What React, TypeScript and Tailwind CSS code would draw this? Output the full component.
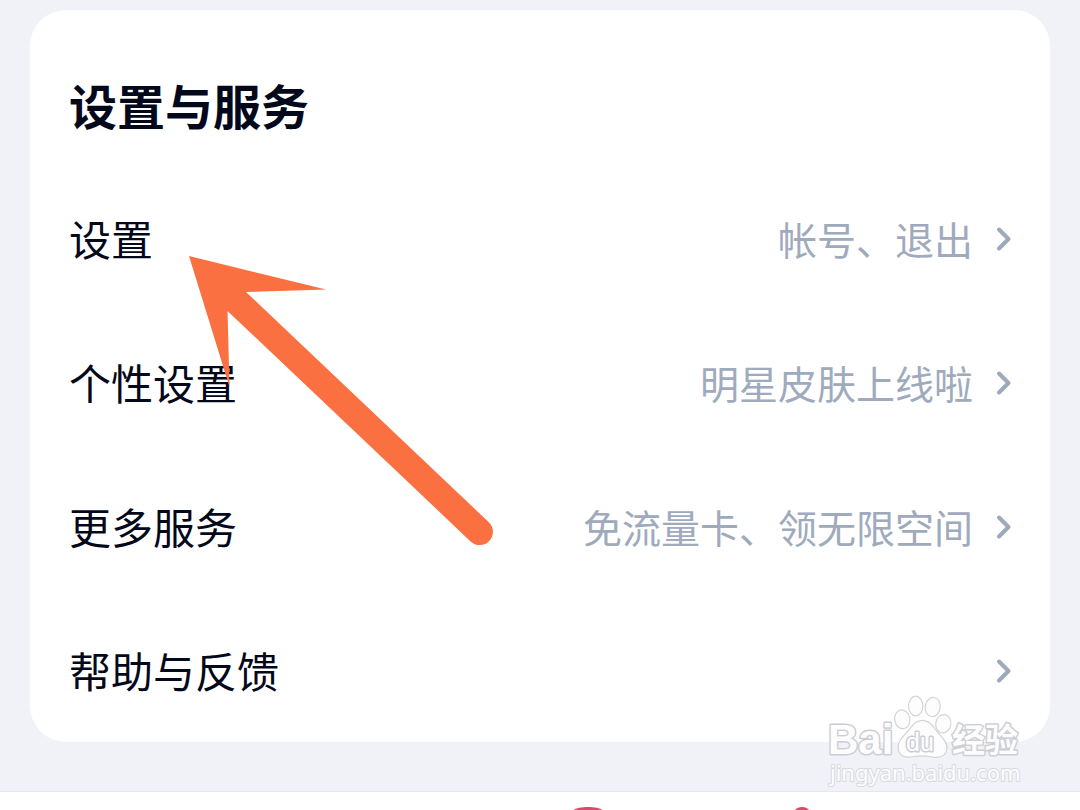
interface SettingItem {
  label: string
  hint?: string
}

const items: SettingItem[] = [
  { label: '设置', hint: '帐号、退出' },
  { label: '个性设置', hint: '明星皮肤上线啦' },
  { label: '更多服务', hint: '免流量卡、领无限空间' },
  { label: '帮助与反馈' },
]

const Chevron = () => (
  <svg className="h-8 w-5 shrink-0" viewBox="0 0 20 32" fill="none" aria-hidden="true">
    <path
      d="M6 7.500L15.500 17L6 26.500"
      stroke="#9fa9bc"
      strokeWidth="4"
      strokeLinecap="round"
      strokeLinejoin="round"
    />
  </svg>
)

const SettingRow = ({ label, hint }: SettingItem) => (
  <li>
    <button type="button" className="flex h-[136px] w-full items-center text-left">
      <span className="flex-1 text-[42px] leading-none text-[#03081a]">{label}</span>
      <span className="flex items-center gap-5 text-[39px] leading-none text-[#a0aabd]">
        {hint}
        <Chevron />
      </span>
    </button>
  </li>
)

const Arrow = () => (
  <svg
    className="pointer-events-none absolute top-[246px] left-[159px] h-[290px] w-[306px]"
    viewBox="189 256 306 290"
    aria-hidden="true"
  >
    <path
      d="M189 256L326 289.5L246 292L488.8 522.2A13.2 13.2 0 0 1 470.6 541.4L227.5 311L229.5 387Z"
      fill="#fb7041"
    />
  </svg>
)

const Watermark = () => (
  <svg
    className="pointer-events-none absolute right-[55px] bottom-0 h-[100px] w-[200px]"
    viewBox="0 0 200 100"
    aria-label="Baidu 经验"
  >
    <g fill="#fdfdfe" stroke="#d3d4d8" strokeWidth="1.2">
      <ellipse cx="77.3" cy="28.3" rx="7.6" ry="9.4" transform="rotate(-12 77.3 28.3)" />
      <ellipse cx="90.7" cy="15" rx="7.2" ry="9.8" />
      <ellipse cx="107.7" cy="16" rx="7.5" ry="9.6" transform="rotate(8 107.7 16)" />
      <ellipse cx="118.3" cy="32.7" rx="7.6" ry="9.2" transform="rotate(10 118.3 32.7)" />
      <path d="M97.3 29.3C90 29.3 86.5 36 82 41C77 46.5 72.5 50 73.2 57.5C74 64.5 79.5 66.8 86 66C91 65.3 94 64.8 98 64.8C102 64.8 105 66 110 66.3C117 66.6 121.5 63.5 122 57C122.3 50.5 117 46.5 112.5 41C108.5 36 105 29.3 97.3 29.3Z" />
    </g>
    <g fill="#fdfdfe" stroke="#cdced3" strokeWidth="3" strokeLinejoin="round" paintOrder="stroke">
      <text x="3" y="63" className="font-['Liberation_Sans',sans-serif] text-[42px] font-bold">
        Bai
      </text>
      <text x="81" y="60" className="font-['Liberation_Sans',sans-serif] text-[25px]">
        du
      </text>
      <text x="127" y="61" className="font-['Noto_Sans_CJK_SC',sans-serif] text-[33px] font-bold">
        经验
      </text>
    </g>
    <text
      x="5"
      y="90"
      fill="#fdfdfe"
      stroke="#d8d9de"
      strokeWidth="2"
      strokeLinejoin="round"
      paintOrder="stroke"
      className="font-['Noto_Sans',sans-serif] text-[22px]"
    >
      jingyan.baidu.com
    </text>
  </svg>
)

// Tops of the tab icons that rise over the lower edge of the window
const TabBar = () => (
  <nav className="flex flex-1 items-end gap-[178px] overflow-hidden border-t border-[#e6e8ef] bg-white pl-[53%]">
    <svg className="h-4 w-8" viewBox="0 0 32 16" aria-hidden="true">
      <path d="M2 16C5 12 27 12 30 16Z" fill="#d94a6a" />
    </svg>
    <svg className="h-4 w-10" viewBox="0 0 40 16" aria-hidden="true">
      <path d="M13 16C16 12 24 12 27 16Z" fill="#d94a6a" />
    </svg>
  </nav>
)

export default function App() {
  return (
    <div className="flex min-h-screen flex-col bg-[#f0f2f8] font-['Noto_Sans_CJK_SC',sans-serif]">
      <main className="relative px-[30px] pt-2.5 pb-[49px]">
        <section className="relative rounded-[36px] bg-white pt-[58px] pr-[37px] pb-1 pl-[39px]">
          <h1 className="pb-[30px] text-[48px] leading-[72px] font-bold text-[#03081a]">设置与服务</h1>
          <ul className="flex flex-col gap-2">
            {items.map((item) => (
              <SettingRow key={item.label} {...item} />
            ))}
          </ul>
          <Arrow />
        </section>
        <Watermark />
      </main>
      <TabBar />
    </div>
  )
}
